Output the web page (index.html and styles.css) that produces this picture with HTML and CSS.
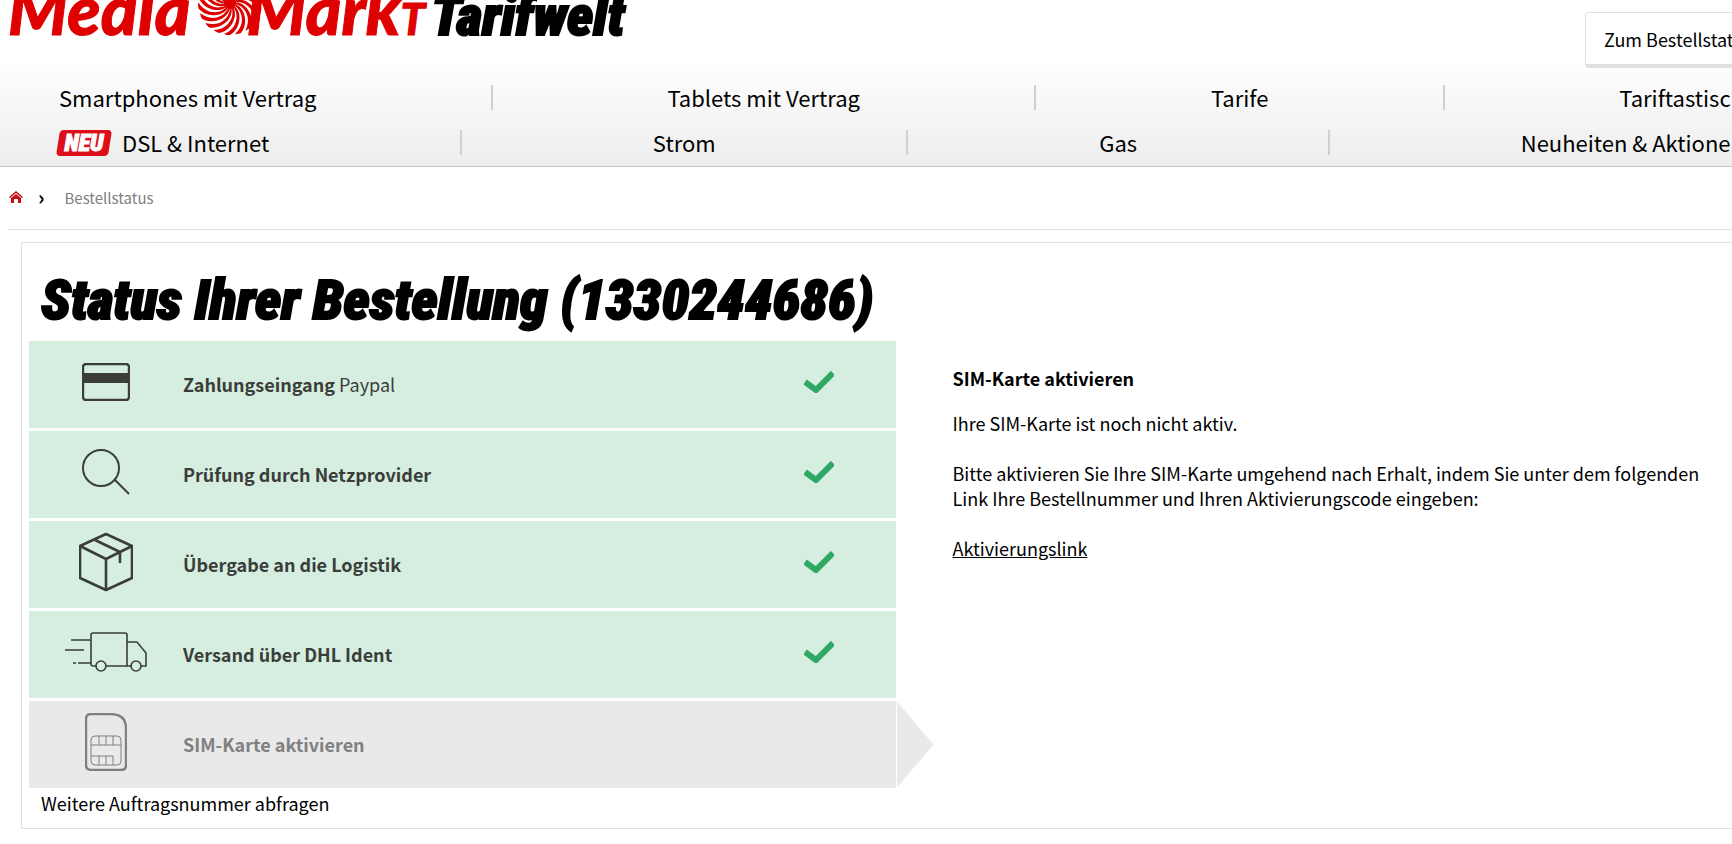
FILE: index.html
```
<!DOCTYPE html>
<html lang="de">
<head>
    <meta charset="UTF-8">
    <meta name="viewport" content="width=device-width, initial-scale=1.0">
    <title>Bestellstatus - MediaMarkt Tarifwelt</title>
    <link rel="stylesheet" href="styles.css">
</head>
<body>
    <div class="page">
        <header class="main-header">
            <div class="header-top">
                <a href="#" class="logo">
                    <span class="logo-word">Media</span>
                    <svg class="logo-swirl" viewBox="-32 -32 64 64" aria-hidden="true">
                        <defs>
                            <path id="blade" d="M0 0C7 3 11 10 9 19C8 24 5 29 0 32C-2 32 -4 32 -6 31C1 28 5 23 6 18C8 11 5 5 0 0Z"/>
                        </defs>
                        <circle r="6"/>
                        <use href="#blade"/>
                        <use href="#blade" transform="rotate(20)"/>
                        <use href="#blade" transform="rotate(40)"/>
                        <use href="#blade" transform="rotate(60)"/>
                        <use href="#blade" transform="rotate(80)"/>
                        <use href="#blade" transform="rotate(100)"/>
                        <use href="#blade" transform="rotate(120)"/>
                        <use href="#blade" transform="rotate(140)"/>
                        <use href="#blade" transform="rotate(160)"/>
                        <use href="#blade" transform="rotate(180)"/>
                        <use href="#blade" transform="rotate(200)"/>
                        <use href="#blade" transform="rotate(220)"/>
                        <use href="#blade" transform="rotate(240)"/>
                        <use href="#blade" transform="rotate(260)"/>
                        <use href="#blade" transform="rotate(280)"/>
                        <use href="#blade" transform="rotate(300)"/>
                        <use href="#blade" transform="rotate(320)"/>
                        <use href="#blade" transform="rotate(340)"/>
                    </svg>
                    <span class="logo-word">Mark<span class="logo-t">t</span></span>
                    <span class="logo-sub">Tarifwelt</span>
                </a>
                <button type="button" class="status-button">Zum Bestellstatus</button>
            </div>
            <nav class="main-nav">
                <ul class="nav-row">
                    <li><a href="#">Smartphones mit Vertrag</a></li>
                    <li class="nav-sep"></li>
                    <li><a href="#">Tablets mit Vertrag</a></li>
                    <li class="nav-sep"></li>
                    <li><a href="#">Tarife</a></li>
                    <li class="nav-sep"></li>
                    <li><a href="#">Tariftastisch</a></li>
                </ul>
                <ul class="nav-row">
                    <li><a href="#" class="nav-new"><span class="badge-new">NEU</span>DSL &amp; Internet</a></li>
                    <li class="nav-sep"></li>
                    <li><a href="#">Strom</a></li>
                    <li class="nav-sep"></li>
                    <li><a href="#">Gas</a></li>
                    <li class="nav-sep"></li>
                    <li><a href="#">Neuheiten &amp; Aktionen</a></li>
                </ul>
            </nav>
        </header>

        <div class="breadcrumb">
            <a href="#" aria-label="Startseite">
                <svg class="icon-home" viewBox="0 0 14 12"><path d="M7 0L14 6L13 7L7 2L1 7L0 6ZM7 3L12 7V12H9V8H5V12H2V7Z"/></svg>
            </a>
            <span class="breadcrumb-arrow">›</span>
            <span>Bestellstatus</span>
        </div>

        <main class="card">
            <h1>Status Ihrer Bestellung (1330244686)</h1>
            <div class="columns">
                <ol class="steps">
                    <li class="step">
                        <span class="step-icon">
                            <svg width="48" height="38" viewBox="0 0 48 38"><rect x="1" y="1" width="46" height="36" rx="3" fill="none" stroke="currentColor" stroke-width="2.4"/><path d="M1 10H47V20H1Z" fill="currentColor"/></svg>
                        </span>
                        <span class="step-text"><strong>Zahlungseingang</strong> Paypal</span>
                        <svg class="check" viewBox="0 0 30 22"><path d="M1 11L12 19L29 2"/></svg>
                    </li>
                    <li class="step">
                        <span class="step-icon">
                            <svg width="48" height="46" viewBox="0 0 48 46"><g fill="none" stroke="currentColor" stroke-width="2"><circle cx="19" cy="19" r="18"/><path d="M33 31L47 45"/></g></svg>
                        </span>
                        <span class="step-text"><strong>Prüfung durch Netzprovider</strong></span>
                        <svg class="check" viewBox="0 0 30 22"><path d="M1 11L12 19L29 2"/></svg>
                    </li>
                    <li class="step">
                        <span class="step-icon">
                            <svg width="54" height="60" viewBox="0 0 54 60"><g fill="none" stroke="currentColor" stroke-width="2.6" stroke-linejoin="round"><path d="M27 2L53 14V46L27 58L1 46V14Z"/><path d="M1 14L27 27L53 14M27 27V58M16 8L41 20V31"/></g></svg>
                        </span>
                        <span class="step-text"><strong>Übergabe an die Logistik</strong></span>
                        <svg class="check" viewBox="0 0 30 22"><path d="M1 11L12 19L29 2"/></svg>
                    </li>
                    <li class="step">
                        <span class="step-icon">
                            <svg width="82" height="40" viewBox="0 0 82 40"><g fill="none" stroke="currentColor" stroke-width="1.6"><path d="M31 34H28Q26 34 26 32V3Q26 1 28 1H60Q62 1 62 3V34H41M62 10H72L81 21V34H76M67 34H62M6 8H26M0 18H19M8 31H11M13 31H26"/><circle cx="36" cy="34" r="5"/><circle cx="71" cy="34" r="5"/></g></svg>
                        </span>
                        <span class="step-text"><strong>Versand über DHL Ident</strong></span>
                        <svg class="check" viewBox="0 0 30 22"><path d="M1 11L12 19L29 2"/></svg>
                    </li>
                    <li class="step step-open">
                        <span class="step-icon">
                            <svg width="42" height="58" viewBox="0 0 42 58"><g fill="none" stroke="currentColor"><path stroke-width="2.4" d="M6 1H25Q41 1 41 15V52Q41 57 36 57H6Q1 57 1 52V6Q1 1 6 1Z"/><path d="M10 23H32Q36 23 36 27V48Q36 52 32 52H10Q6 52 6 48V27Q6 23 10 23ZM6 32H36M14 23V32M21 23V32M28 23V32M6 43H28V52M14 43V52M21 43V52"/></g></svg>
                        </span>
                        <span class="step-text"><strong>SIM-Karte aktivieren</strong></span>
                    </li>
                </ol>
                <section class="info">
                    <h2>SIM-Karte aktivieren</h2>
                    <p>Ihre SIM-Karte ist noch nicht aktiv.</p>
                    <p>Bitte aktivieren Sie Ihre SIM-Karte umgehend nach Erhalt, indem Sie unter dem folgenden Link Ihre Bestellnummer und Ihren Aktivierungscode eingeben:</p>
                    <p><a href="#">Aktivierungslink</a></p>
                </section>
            </div>
            <a href="#" class="more-link">Weitere Auftragsnummer abfragen</a>
        </main>
    </div>
</body>
</html>
```
FILE: styles.css
```
:root {
    --red: #df0000;
    --green-bg: #d5eedf;
    --grey-bg: #e9e9e9;
    --line: #e0e0e0;
    --font-family: "Noto Sans CJK SC", "Open Sans", sans-serif;
    --font-display: "Liberation Sans Narrow", "Roboto Condensed", "Open Sans Condensed", "Noto Sans CJK SC", sans-serif;
}

* {
    box-sizing: border-box;
}

body {
    margin: 0;
    overflow-x: hidden;
    background: #fff;
    color: #000;
    font-family: var(--font-family);
    font-size: 18px;
    line-height: 25px;
}

a {
    color: inherit;
    text-decoration: none;
}

ul, ol {
    margin: 0;
    padding: 0;
    list-style: none;
}

/* the content is a little wider than the window */
.page {
    margin-right: -46px;
}

/* --- Header --- */
.main-header {
    overflow: hidden;
    background: linear-gradient(#fff 0, #fff 35%, #ededed 100%);
    border-bottom: 1px solid #c8c8c8;
}

.header-top {
    display: flex;
    justify-content: space-between;
    align-items: flex-end;
    height: 68px;
    padding: 0 6px 0 8px;
}

.logo {
    display: flex;
    align-items: baseline;
    height: 80px;
    margin-bottom: 19px;
    line-height: 80px;
    color: var(--red);
}

.logo-word {
    font-family: Lato, sans-serif;
    font-size: 68px;
    font-weight: 900;
    font-style: italic;
    -webkit-text-stroke: 1px var(--red);
}

.logo-t {
    font-size: 44px;
    text-transform: uppercase;
}

.logo-swirl {
    width: 64px;
    height: 64px;
    margin: 0 -16px 0 8px;
    fill: var(--red);
}

.logo-sub {
    margin-left: 6px;
    color: #000;
    font-family: var(--font-display);
    font-size: 56px;
    font-weight: 900;
    font-style: italic;
    -webkit-text-stroke: 2px #000;
}

.status-button {
    height: 56px;
    padding: 0 18px;
    border: 1px solid var(--line);
    border-bottom: 4px solid var(--line);
    border-radius: 4px;
    background: #fff;
    color: #000;
    font-family: inherit;
    font-size: 18px;
}

.main-nav {
    padding: 7px 34px 1px 59px;
    font-size: 22px;
}

.nav-row {
    display: flex;
    justify-content: space-between;
    align-items: center;
    height: 45px;
    white-space: nowrap;
}

.nav-sep {
    width: 2px;
    height: 25px;
    background: #d0d0d0;
}

.nav-new {
    display: flex;
    align-items: center;
    gap: 10px;
    margin-left: -3px;
}

.badge-new {
    position: relative;
    z-index: 0;
    width: 56px;
    color: #fff;
    font-family: var(--font-display);
    font-size: 24px;
    font-weight: 900;
    font-style: italic;
    line-height: 26px;
    text-align: center;
    -webkit-text-stroke: 1px #fff;
}

/* slanted red plate behind the badge text */
.badge-new::before {
    content: "";
    position: absolute;
    z-index: -1;
    inset: 0 2px;
    border-radius: 4px;
    background: #dc0f1a;
    transform: skewX(-9deg);
}

/* --- Breadcrumb --- */
.breadcrumb {
    display: flex;
    align-items: center;
    height: 63px;
    margin: 0 8px 12px;
    padding: 0 0 2px 1px;
    border-bottom: 1px solid var(--line);
    color: #808080;
    font-size: 15px;
}

.icon-home {
    display: block;
    width: 14px;
    height: 12px;
    fill: #c8101c;
}

.breadcrumb-arrow {
    margin: 0 20px 2px 15px;
    color: #000;
    font-size: 20px;
    font-weight: bold;
}

/* --- Order status --- */
.card {
    margin: 0 8px 16px 21px;
    padding: 24px 7px 11px;
    border: 1px solid var(--line);
}

.card h1 {
    margin: 0 0 8px;
    padding-left: 12px;
    font-family: var(--font-display);
    font-size: 56px;
    font-weight: 900;
    font-style: italic;
    line-height: 66px;
    white-space: nowrap;
    -webkit-text-stroke: 2px #000;
}

.columns {
    display: grid;
    grid-template-columns: 1fr 1fr;
}

.steps {
    display: grid;
    gap: 3px;
}

.step {
    display: flex;
    align-items: center;
    height: 87px;
    padding-right: 62px;
    background: var(--green-bg);
    color: #3a3d3a;
}

.step strong,
.info h2 {
    font-weight: 700;
}

.step-icon {
    display: flex;
    justify-content: center;
    width: 154px;
    padding-bottom: 6px;
}

.step-text {
    flex: 1;
}

.check {
    width: 30px;
    height: 22px;
    margin-bottom: 6px;
    fill: none;
    stroke: #2fa866;
    stroke-width: 6;
}

.step-open {
    position: relative;
    background: var(--grey-bg);
    color: #808080;
}

/* arrow pointing at the info column */
.step-open::after {
    content: "";
    position: absolute;
    left: 100%;
    top: 0;
    width: 37px;
    height: 100%;
    margin-left: 1px;
    background: var(--grey-bg);
    clip-path: polygon(0 0, 100% 50%, 0 100%);
}

.info {
    padding: 25px 57px 0;
}

.info h2 {
    margin: 0 0 20px;
    font-size: 18px;
    line-height: 25px;
}

.info p {
    margin: 0 0 25px;
}

.info a {
    text-decoration: underline;
}

.more-link {
    display: inline-block;
    margin: 3px 0 1px 12px;
}
```
